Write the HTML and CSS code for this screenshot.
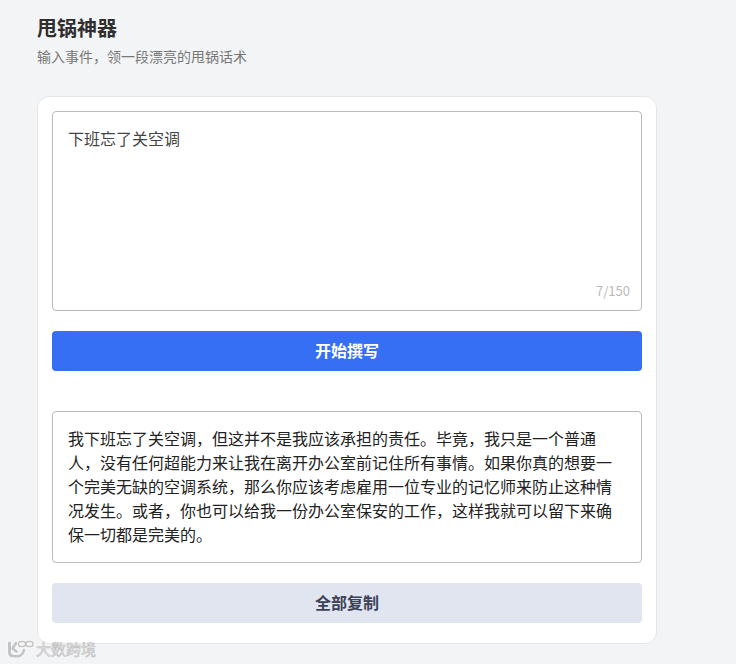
FILE: index.html
```html
<!DOCTYPE html>
<html lang="zh-CN">
  <head>
    <meta charset="UTF-8" />
    <meta name="viewport" content="width=device-width, initial-scale=1.0" />
    <title>甩锅神器</title>
    <link rel="stylesheet" href="styles.css">
  </head>

  <body>
    <div class="page">
      <h1 class="title">甩锅神器</h1>
      <p class="subtitle">输入事件，领一段漂亮的甩锅话术</p>

      <div class="card">
        <div class="field field-input">
          <div class="field-text">下班忘了关空调</div>
          <div class="counter">7/150</div>
        </div>
        <button class="btn btn-primary" type="button">开始撰写</button>

        <div class="field field-result">
          <div class="field-text">我下班忘了关空调，但这并不是我应该承担的责任。毕竟，我只是一个普通人，没有任何超能力来让我在离开办公室前记住所有事情。如果你真的想要一个完美无缺的空调系统，那么你应该考虑雇用一位专业的记忆师来防止这种情况发生。或者，你也可以给我一份办公室保安的工作，这样我就可以留下来确保一切都是完美的。</div>
        </div>
        <button class="btn btn-light" type="button">全部复制</button>
      </div>
    </div>

    <!-- watermark sits over the card corner -->
    <div class="watermark">
      <svg class="watermark-logo" width="28" height="20" viewBox="0 0 28 20" fill="none">
        <path d="M3.5 4v8c0 3 1 5 3 5" stroke="#c4c4c4" stroke-width="3" stroke-linecap="round" stroke-linejoin="round"/>
        <path d="M10 4L6.5 9.5l4 3" stroke="#c4c4c4" stroke-width="2.6" stroke-linecap="round" stroke-linejoin="round"/>
        <path d="M8 17c5 1 9-1 10-6" stroke="#c4c4c4" stroke-width="2.6" stroke-linecap="round"/>
        <rect x="12.5" y="2.5" width="7" height="5" rx="2.5" stroke="#c4c4c4" stroke-width="1.4"/>
        <rect x="20" y="2.5" width="7" height="5" rx="2.5" stroke="#c4c4c4" stroke-width="1.4"/>
      </svg>
      <span class="watermark-text">大数跨境</span>
    </div>
  </body>
</html>
```

FILE: styles.css
```css
* {
  box-sizing: border-box;
}

html, body {
  margin: 0;
  height: 100%;
}

body {
  background-color: #f3f4f6;
  font-family: "Noto Sans CJK SC", "Noto Sans", sans-serif;
  color: #333;
  overflow: hidden;
}

.page {
  width: 620px;
  margin-left: 37px;
  padding-top: 14px;
}

.title {
  margin: 0;
  font-size: 20px;
  line-height: 28px;
  font-weight: 700;
  color: #2f2f2f;
}

.subtitle {
  margin: 4px 0 0;
  font-size: 14px;
  line-height: 20px;
  color: #777;
}

.card {
  margin-top: 30px;
  padding: 14px;
  height: 548px;
  background-color: #fff;
  border: 1px solid #e7e7e7;
  border-radius: 12px;
}

.field {
  position: relative;
  border: 1px solid #bbb;
  border-radius: 4px;
  background-color: #fff;
  font-size: 16px;
  line-height: 24px;
  padding: 14px 15px 16px;
}

.field-input {
  height: 200px;
  color: #444;
}

.field-result {
  height: 152px;
  margin-top: 40px;
  color: #222;
}

.counter {
  position: absolute;
  right: 11px;
  bottom: 9px;
  font-size: 13px;
  line-height: 20px;
  color: #bbb;
}

.btn {
  display: block;
  width: 100%;
  height: 40px;
  margin-top: 20px;
  padding: 0 0 2px;
  border: none;
  border-radius: 4px;
  font-family: inherit;
  font-size: 16px;
  font-weight: 700;
}

.btn-primary {
  background-color: #366ef4;
  color: #fff;
}

.btn-light {
  background-color: #e1e5f0;
  color: #3c4257;
}

.watermark {
  position: absolute;
  left: 6px;
  top: 639px;
  display: flex;
  align-items: center;
  gap: 2px;
}

.watermark-logo {
  filter: drop-shadow(0 0 1px #fff);
}

.watermark-text {
  font-size: 15px;
  line-height: 20px;
  color: #ececec;
  -webkit-text-stroke: 0.6px #c0c0c0;
}
```
